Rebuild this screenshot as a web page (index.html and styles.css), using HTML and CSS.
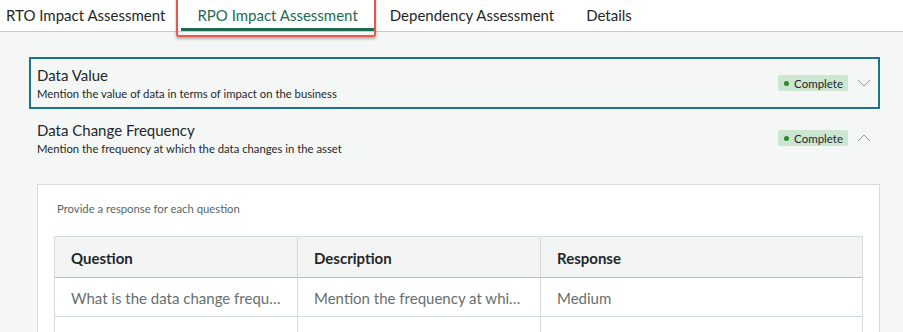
FILE: index.html
```html
<!DOCTYPE html>
<html>
<head>
<meta charset="utf-8">
<link rel="stylesheet" href="styles.css">
</head>
<body>
<nav class="tabs">
  <div class="tab">RTO Impact Assessment</div>
  <div class="tab tab-active">RPO Impact Assessment<span class="highlight"></span></div>
  <div class="tab">Dependency Assessment</div>
  <div class="tab">Details</div>
</nav>
<main class="content">
  <section class="item item-focused">
    <div class="item-text">
      <div class="item-title">Data Value</div>
      <div class="item-sub">Mention the value of data in terms of impact on the business</div>
    </div>
    <span class="badge"><span class="dot"></span>Complete</span>
    <svg class="chev" width="14" height="8" viewBox="0 0 14 8"><path d="M1 1 L7 7 L13 1" fill="none" stroke="#8c9696" stroke-width="1"/></svg>
  </section>
  <section class="item">
    <div class="item-text">
      <div class="item-title">Data Change Frequency</div>
      <div class="item-sub">Mention the frequency at which the data changes in the asset</div>
    </div>
    <span class="badge"><span class="dot"></span>Complete</span>
    <svg class="chev" width="14" height="8" viewBox="0 0 14 8"><path d="M1 7 L7 1 L13 7" fill="none" stroke="#8c9696" stroke-width="1"/></svg>
  </section>
  <div class="panel">
    <p class="hint">Provide a response for each question</p>
    <div class="table">
      <div class="cell th">Question</div>
      <div class="cell th">Description</div>
      <div class="cell th last">Response</div>
      <div class="cell td">What is the data change frequ…</div>
      <div class="cell td">Mention the frequency at whi…</div>
      <div class="cell td last">Medium</div>
      <div class="cell td empty"></div>
      <div class="cell td empty"></div>
      <div class="cell td empty last"></div>
    </div>
  </div>
</main>
</body>
</html>
```

FILE: styles.css
```css
* { box-sizing: border-box; }
html, body { margin: 0; padding: 0; }
body {
  width: 903px;
  height: 332px;
  overflow: hidden;
  background: #f5f7f7;
  font-family: "Lato", "Liberation Sans", sans-serif;
  color: #1f2828;
}
.tabs {
  display: flex;
  height: 32px;
  background: #ffffff;
  border-bottom: 1px solid #c6cccc;
  margin-left: -10px;
}
.tab {
  position: relative;
  padding: 0 16px;
  height: 31px;
  line-height: 30px;
  font-size: 15px;
  color: #1f2626;
  white-space: nowrap;
}
.tab-active {
  color: #1d6a50;
  border-bottom: 3px solid #1f6a4f;
}
.highlight {
  position: absolute;
  left: -5px;
  right: -2px;
  top: -3px;
  height: 40px;
  border: 2px solid #e6584b;
  border-radius: 2px;
  box-shadow: 0 2px 3px rgba(0,0,0,0.3);
}
.content {
  padding: 25px 23px 0 29px;
}
.item {
  display: flex;
  align-items: center;
  height: 52px;
  border: 2px solid transparent;
  padding: 0 7px 0 6px;
  margin-bottom: 3px;
}
.item-focused {
  border-color: #1e7389;
}
.item-text { flex: 1; }
.item-title {
  font-size: 15px;
  line-height: 20px;
  color: #1f2828;
}
.item-sub {
  font-size: 11.3px;
  line-height: 16px;
  color: #1f2828;
  margin-top: 1px;
}
.badge {
  display: inline-flex;
  align-items: center;
  height: 16px;
  padding: 0 5px 0 6px;
  background: #cde6d1;
  border-radius: 2px;
  font-size: 11.5px;
  color: #1f2828;
}
.dot {
  width: 5px;
  height: 5px;
  border-radius: 50%;
  background: #2b8a2f;
  margin-right: 5px;
}
.chev { margin-left: 9px; }
.panel {
  margin: 20px 0 0 8px;
  background: #ffffff;
  border: 1px solid #d5dada;
  padding: 16px 16px 0 16px;
  height: 200px;
}
.hint {
  margin: 0 0 19px 3px;
  font-size: 11.3px;
  line-height: 16px;
  color: #5b6666;
}
.table {
  display: grid;
  grid-template-columns: 243px 243px 1fr;
  border: 1px solid #d5dada;
  border-bottom: none;
}
.cell {
  padding: 0 16px;
  border-right: 1px solid #d5dada;
  white-space: nowrap;
  overflow: hidden;
}
.cell.last { border-right: none; }
.th {
  height: 41px;
  line-height: 42px;
  background: #f3f5f5;
  border-bottom: 1px solid #b9c0c0;
  font-weight: 700;
  font-size: 15px;
  color: #1f2828;
}
.td {
  height: 39px;
  line-height: 40px;
  border-bottom: 1px solid #d5dada;
  font-size: 15px;
  color: #66706f;
}
.td.empty { height: 30px; }
```
